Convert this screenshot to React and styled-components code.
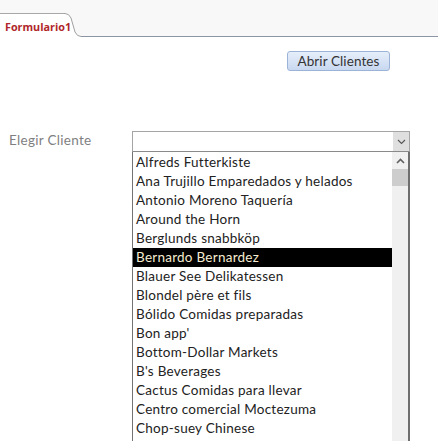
import React from 'react';
import styled, { createGlobalStyle } from 'styled-components';

const GlobalStyle = createGlobalStyle`
  body {
    margin: 0;
    background: #ffffff;
    font-family: Lato, "Open Sans", sans-serif;
  }
`;

const Page = styled.div`
  width: 438px;
  height: 441px;
  overflow: hidden;
  background: #ffffff;
`;

const TabStrip = styled.div`
  display: flex;
  align-items: flex-end;
  height: 37px;
  background: #f8f8f8;
`;

const Tab = styled.div`
  position: relative;
  z-index: 1;
  box-sizing: border-box;
  width: 64px;
  height: 24px;
  border-top: 1px solid #a8a8a8;
  background: #ffffff;
  color: #b0262a;
  font-family: "Open Sans", sans-serif;
  font-weight: 700;
  font-size: 10.8px;
  padding: 5px 0 0 5px;
  white-space: nowrap;
`;

const TabCorner = styled.svg`
  display: block;
  width: 17px;
  height: 24px;
`;

const StripFiller = styled.div`
  flex: 1;
  height: 24px;
  box-sizing: border-box;
  border-bottom: 1px solid #8c95a3;
`;

const Content = styled.div`
  padding-top: 14px;
`;

const ButtonRow = styled.div`
  display: flex;
  justify-content: flex-end;
  padding-right: 48px;
`;

const Button = styled.button`
  box-sizing: border-box;
  width: 103px;
  height: 20px;
  padding: 0;
  border: 1px solid #9cb3d8;
  border-radius: 3px;
  background: linear-gradient(#e6eefa, #c8d8f0);
  color: #333333;
  font-family: Lato, sans-serif;
  font-size: 13.5px;
  letter-spacing: 0.1px;
  line-height: 17px;
`;

const FieldRow = styled.div`
  display: flex;
  margin-top: 60px;
`;

const Label = styled.div`
  flex-shrink: 0;
  width: 132px;
  padding-left: 9px;
  box-sizing: border-box;
  color: #7f7f7f;
  font-size: 13.5px;
  letter-spacing: 0.3px;
  line-height: 18px;
`;

const ComboColumn = styled.div`
  flex-shrink: 0;
  width: 278px;
  display: flex;
  flex-direction: column;
`;

const Combo = styled.div`
  display: flex;
  height: 21px;
  box-sizing: border-box;
  border: 1px solid #a5a5a5;
  border-bottom-color: #8a8a8a;
`;

const ComboField = styled.div`
  flex: 1;
  background: #ffffff;
`;

const DropButton = styled.div`
  width: 16px;
  background: #dfdfdf;
  display: flex;
  align-items: center;
  justify-content: center;
`;

const ListBox = styled.div`
  display: flex;
  height: 300px;
  box-sizing: border-box;
  border-left: 1px solid #747474;
  border-right: 2px solid #6e6e6e;
`;

const Items = styled.div`
  flex: 1;
  padding-top: 1px;
`;

const Item = styled.div`
  height: 19px;
  line-height: 19px;
  padding-left: 3px;
  font-size: 13.5px;
  letter-spacing: 0.25px;
  white-space: nowrap;
  color: ${p => (p.$selected ? '#f6ecd2' : '#222222')};
  background: ${p => (p.$selected ? '#000000' : 'transparent')};
`;

const ScrollBar = styled.div`
  width: 16px;
  background: #f0f0f0;
  display: flex;
  flex-direction: column;
`;

const ScrollArrow = styled.div`
  height: 17px;
  display: flex;
  align-items: center;
  justify-content: center;
`;

const Thumb = styled.div`
  height: 17px;
  background: #cdcdcd;
`;

const customers = [
  'Alfreds Futterkiste',
  'Ana Trujillo Emparedados y helados',
  'Antonio Moreno Taquería',
  'Around the Horn',
  'Berglunds snabbköp',
  'Bernardo Bernardez',
  'Blauer See Delikatessen',
  'Blondel père et fils',
  'Bólido Comidas preparadas',
  "Bon app'",
  'Bottom-Dollar Markets',
  "B's Beverages",
  'Cactus Comidas para llevar',
  'Centro comercial Moctezuma',
  'Chop-suey Chinese',
];

export default function App() {
  return (
    <Page>
      <GlobalStyle />
      <TabStrip>
        <Tab>Formulario1</Tab>
        <TabCorner viewBox="0 0 17 24">
          <path d="M0 0 L1 0 Q5 0 7 5 L11 19 Q13 23.5 17 23.5 L17 24 L0 24 Z" fill="#ffffff" />
          <path d="M0 0.5 L1 0.5 Q5 0.5 7 5 L11 19 Q13 23.5 17 23.5" fill="none" stroke="#a0a0a0" strokeWidth="1" />
        </TabCorner>
        <StripFiller />
      </TabStrip>
      <Content>
        <ButtonRow>
          <Button>Abrir Clientes</Button>
        </ButtonRow>
        <FieldRow>
          <Label>Elegir Cliente</Label>
          <ComboColumn>
            <Combo>
              <ComboField />
              <DropButton>
                <svg width="9" height="6" viewBox="0 0 9 6">
                  <path d="M1 1 L4.5 4.5 L8 1" fill="none" stroke="#555" strokeWidth="1.1" />
                </svg>
              </DropButton>
            </Combo>
            <ListBox>
              <Items>
                {customers.map(name => (
                  <Item key={name} $selected={name === 'Bernardo Bernardez'}>
                    {name}
                  </Item>
                ))}
              </Items>
              <ScrollBar>
                <ScrollArrow>
                  <svg width="9" height="6" viewBox="0 0 9 6">
                    <path d="M1 5 L4.5 1.5 L8 5" fill="none" stroke="#606060" strokeWidth="1.6" />
                  </svg>
                </ScrollArrow>
                <Thumb />
              </ScrollBar>
            </ListBox>
          </ComboColumn>
        </FieldRow>
      </Content>
    </Page>
  );
}
